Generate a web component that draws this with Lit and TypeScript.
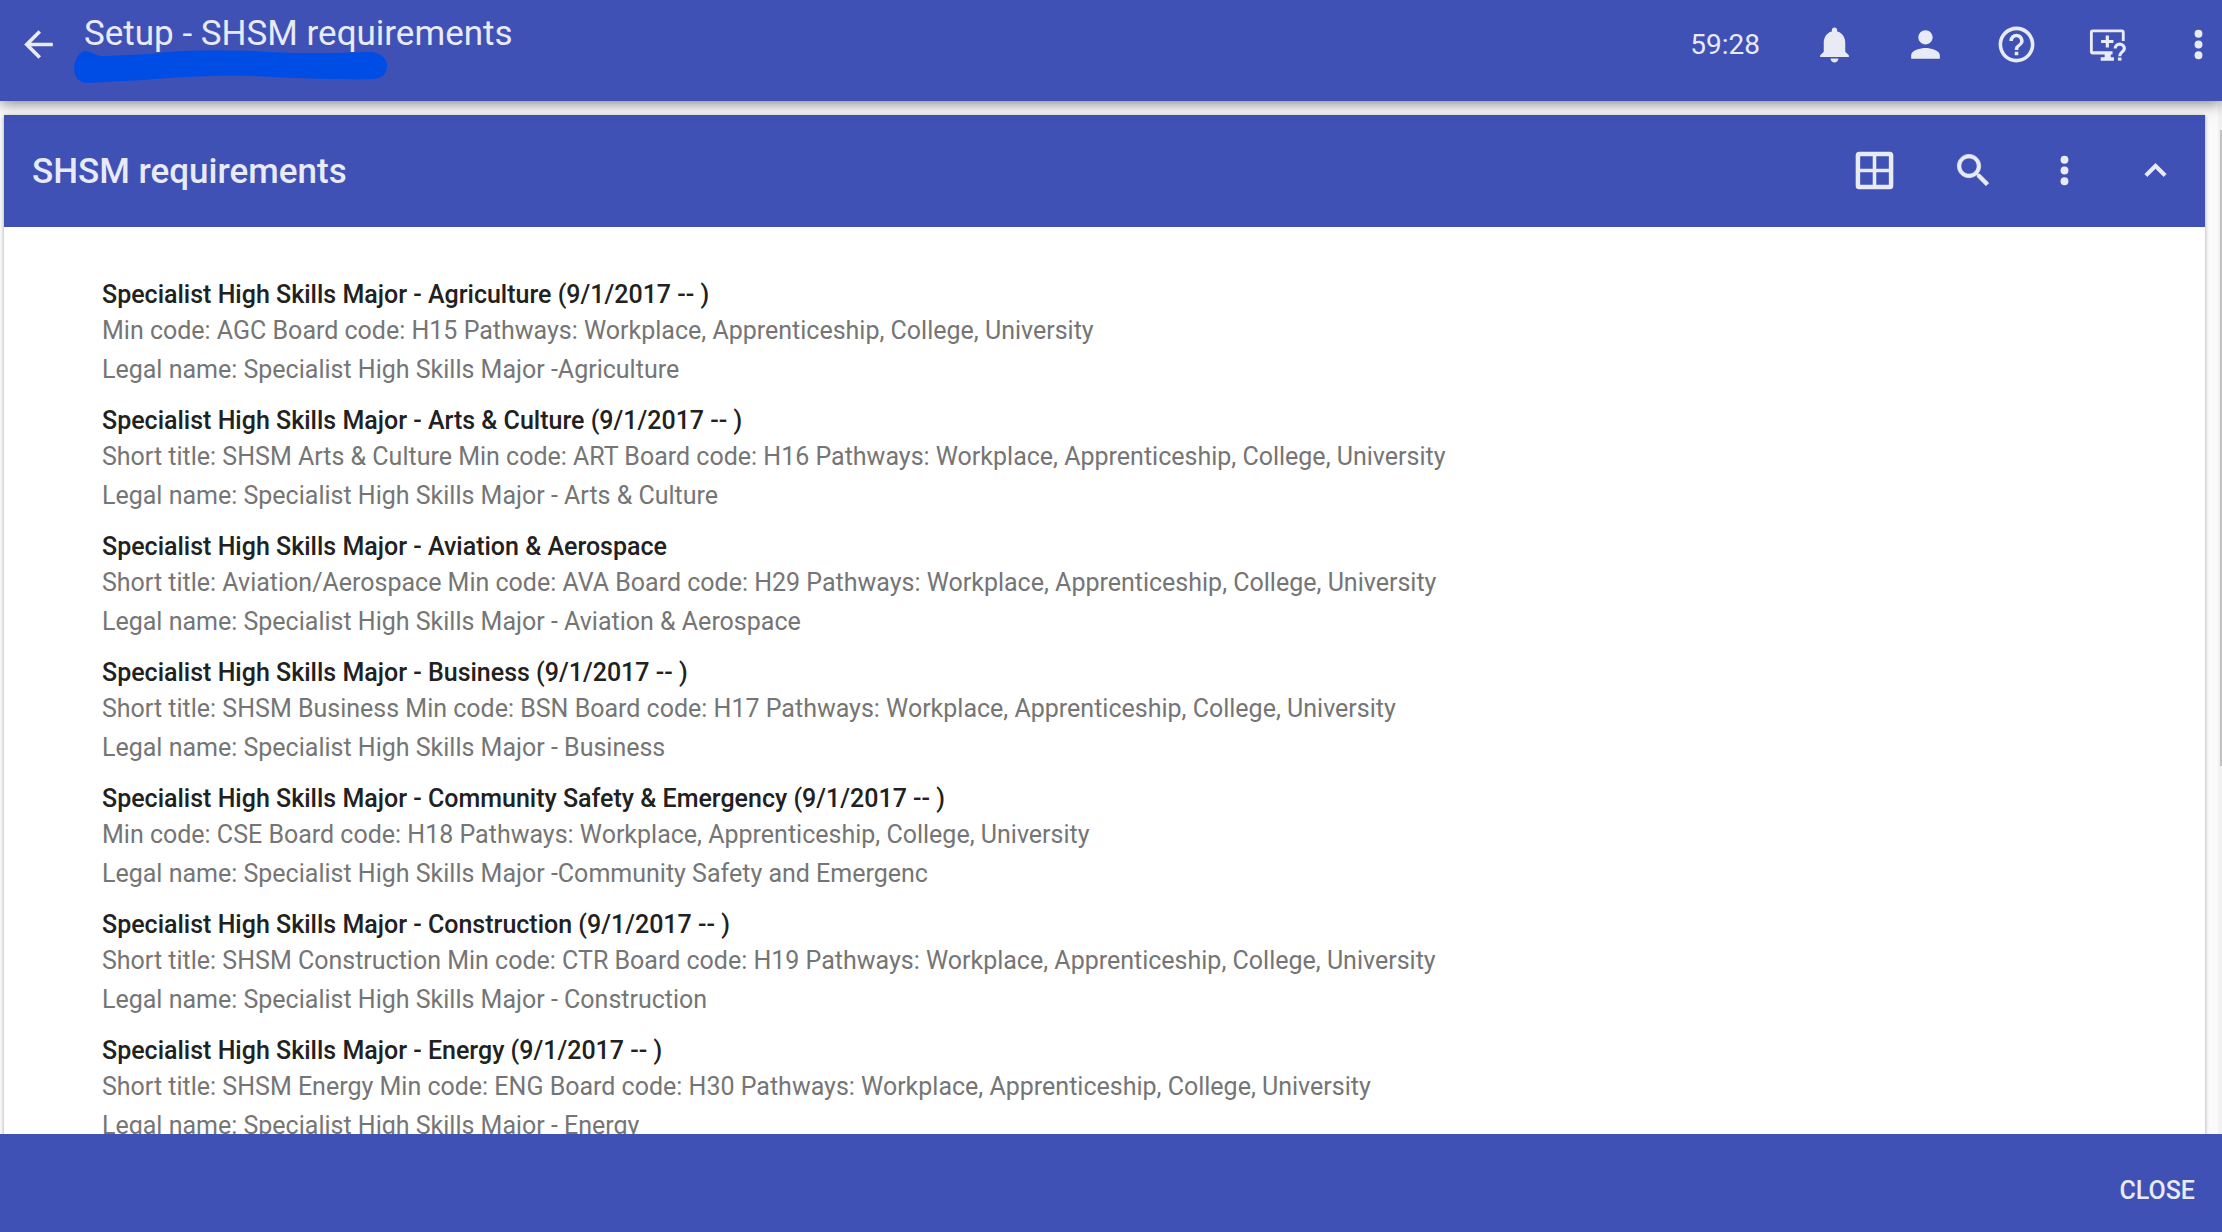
import { LitElement, html, css, svg } from "lit";
import { customElement, property } from "lit/decorators.js";

const ICONS = {
  back: svg`<path d="M20 11H7.83l5.59-5.59L12 4l-8 8 8 8 1.41-1.41L7.83 13H20z"/>`,
  bell: svg`<path d="M12 22c1.2 0 2.200-.9 2.200-2.200h-4.400c0 1.300.99 2.200 2.200 2.200zm6-6v-5c0-3.070-1.640-5.640-4.500-6.320V4c0-.83-.67-1.500-1.500-1.500s-1.500.67-1.500 1.500v.68C7.630 5.360 6 7.920 6 11v5l-2 2v1h16v-1z"/>`,
  person: svg`<path d="M12 12c2.21 0 4-1.79 4-4s-1.79-4-4-4-4 1.79-4 4 1.79 4 4 4zm0 2c-2.67 0-8 1.34-8 4v2h16v-2c0-2.66-5.33-4-8-4z"/>`,
  help: svg`<path d="M11 18h2v-2h-2zm1-16C6.48 2 2 6.48 2 12s4.48 10 10 10 10-4.48 10-10S17.52 2 12 2m0 18c-4.41 0-8-3.59-8-8s3.59-8 8-8 8 3.59 8 8-3.59 8-8 8m0-14c-2.21 0-4 1.79-4 4h2c0-1.1.9-2 2-2s2 .9 2 2c0 2-3 1.75-3 5h2c0-2.25 3-2.5 3-5 0-2.21-1.79-4-4-4"/>`,
  screen: svg`<path d="M21.600 10.100V5.100c0-.9-.6-1.500-1.500-1.500H3.700c-.9 0-1.500.6-1.500 1.500v11c0 .9.6 1.500 1.500 1.500h6.700v1.500H8.200V21h7.400v-1.900h-1.800v-1.500h1v-1.900H3.800V5.200h16.200v4.900z"/><path d="M11 7h1.800v2.500h2.500v1.700h-2.500v2.500H11v-2.500H8.400V9.500H11z"/><path d="M17.800 19.300h2V21h-2z"/><path d="M16.300 14.300c0-1.500 1.100-2.500 2.500-2.500s2.600 1 2.600 2.400c0 1.900-2.600 2-2.600 4.300" fill="none" stroke="currentColor" stroke-width="1.800"/>`,
  more: svg`<circle cx="12" cy="6" r="2.200"/><circle cx="12" cy="12" r="2.200"/><circle cx="12" cy="18" r="2.200"/>`,
  grid: svg`<path fill-rule="evenodd" d="M3.500 1.500h17a2 2 0 0 1 2 2v17a2 2 0 0 1-2 2h-17a2 2 0 0 1-2-2v-17a2 2 0 0 1 2-2zM4 4v7h7V4zM13 4v7h7V4zM4 13v7h7v-7zM13 13v7h7v-7z"/>`,
  search: svg`<path stroke="currentColor" stroke-width=".4" d="M15.500 14h-.79l-.28-.27C15.410 12.590 16 11.110 16 9.500 16 5.910 13.090 3 9.500 3S3 5.910 3 9.500 5.910 16 9.500 16c1.610 0 3.090-.59 4.230-1.570l.27.28v.79l5 4.990L20.490 19zm-6 0C7.010 14 5 11.990 5 9.500S7.010 5 9.500 5 14 7.010 14 9.500 11.990 14 9.500 14"/>`,
  up: svg`<path stroke="currentColor" stroke-width=".4" d="M12 8l-6 6 1.410 1.410L12 10.830l4.590 4.580L18 14z"/>`,
};

type IconName = keyof typeof ICONS;

interface Requirement {
  title: string;
  codes: string;
  legal: string;
}

const PATHWAYS = "Pathways: Workplace, Apprenticeship, College, University";

const REQUIREMENTS: Requirement[] = [
  {
    title: "Specialist High Skills Major - Agriculture (9/1/2017 -- )",
    codes: "Min code: AGC Board code: H15",
    legal: "Specialist High Skills Major -Agriculture",
  },
  {
    title: "Specialist High Skills Major - Arts & Culture (9/1/2017 -- )",
    codes: "Short title: SHSM Arts & Culture Min code: ART Board code: H16",
    legal: "Specialist High Skills Major - Arts & Culture",
  },
  {
    title: "Specialist High Skills Major - Aviation & Aerospace",
    codes: "Short title: Aviation/Aerospace Min code: AVA Board code: H29",
    legal: "Specialist High Skills Major - Aviation & Aerospace",
  },
  {
    title: "Specialist High Skills Major - Business (9/1/2017 -- )",
    codes: "Short title: SHSM Business Min code: BSN Board code: H17",
    legal: "Specialist High Skills Major - Business",
  },
  {
    title: "Specialist High Skills Major - Community Safety & Emergency (9/1/2017 -- )",
    codes: "Min code: CSE Board code: H18",
    legal: "Specialist High Skills Major -Community Safety and Emergenc",
  },
  {
    title: "Specialist High Skills Major - Construction (9/1/2017 -- )",
    codes: "Short title: SHSM Construction Min code: CTR Board code: H19",
    legal: "Specialist High Skills Major - Construction",
  },
  {
    title: "Specialist High Skills Major - Energy (9/1/2017 -- )",
    codes: "Short title: SHSM Energy Min code: ENG Board code: H30",
    legal: "Specialist High Skills Major - Energy",
  },
];

@customElement("icon-button")
class IconButton extends LitElement {
  @property() icon: IconName = "more";
  @property() label = "";

  static styles = css`
    :host {
      display: block;
      flex: none;
    }
    .button {
      display: block;
      padding: 0;
      border: 0;
      background: none;
      color: inherit;
      cursor: pointer;
    }
    .glyph {
      display: block;
      width: 43px;
      height: 43px;
      fill: currentColor;
    }
  `;

  render() {
    return html`<button class="button" type="button" aria-label=${this.label}>
      <svg class="glyph" viewBox="0 0 24 24" aria-hidden="true">${ICONS[this.icon]}</svg>
    </button>`;
  }
}

@customElement("app-root")
class AppRoot extends LitElement {
  static styles = css`
    :host {
      display: flex;
      flex-direction: column;
      height: 100vh;
      overflow: hidden;
      background: #fafafa;
      color: #212121;
      font-family: Roboto, "Liberation Sans", sans-serif;
      font-size: 25px;
    }
    .topbar {
      position: relative;
      z-index: 1;
      display: flex;
      flex: none;
      align-items: flex-start;
      box-sizing: border-box;
      height: 101px;
      padding: 0 2px 0 17px;
      background: #3f51b5;
      color: #e8eaf6;
      box-shadow: 0 2px 14px rgba(0, 0, 0, 0.5);
    }
    .back {
      margin-top: 23px;
    }
    .heading {
      flex: 1;
      margin-left: 24px;
      padding-top: 14px;
    }
    .title {
      margin: 0;
      font-size: 35px;
      line-height: 40px;
      font-weight: 400;
    }
    .scribble {
      position: absolute;
      left: 74px;
      top: 50px;
      width: 314px;
      height: 34px;
      fill: #004de6;
    }
    .tools {
      display: flex;
      align-items: center;
      gap: 48px;
      margin-top: 23px;
    }
    .timer {
      font-size: 28px;
      line-height: 43px;
      margin-right: 5px;
    }
    .scroller {
      display: flex;
      flex: 1;
      min-height: 0;
      overflow: hidden;
    }
    .panel {
      flex: 1;
      align-self: flex-start;
      margin: 14px 13px 0 4px;
      background: #fff;
      box-shadow: 0 1px 4px rgba(0, 0, 0, 0.35);
    }
    .panel-head {
      display: flex;
      align-items: flex-start;
      justify-content: space-between;
      box-sizing: border-box;
      height: 112px;
      padding: 34px 28px 0;
      background: #3f51b5;
      color: #e8eaf6;
    }
    .panel-title {
      margin: 0;
      font-size: 35px;
      line-height: 45px;
      font-weight: 500;
    }
    .panel-head .tools {
      margin-top: 0;
    }
    .wide {
      margin-right: 8px;
    }
    .list {
      margin: 0;
      padding: 50px 98px 40px;
      list-style: none;
    }
    .item {
      height: 126px;
    }
    .name,
    .detail {
      margin: 0;
      font-size: 25px;
    }
    .name {
      line-height: 36px;
      font-weight: 500;
    }
    .detail {
      line-height: 41px;
      color: #757575;
    }
    .codes {
      line-height: 36px;
    }
    .track {
      flex: none;
      box-sizing: border-box;
      width: 4px;
      padding: 29px 0 0 2px;
      background: #f1f1f1;
    }
    .thumb {
      height: 636px;
      background: #c1c1c1;
    }
    .footer {
      display: flex;
      flex: none;
      align-items: center;
      justify-content: flex-end;
      box-sizing: border-box;
      height: 98px;
      padding: 16px 27px 0;
      background: #3f51b5;
    }
    .close {
      padding: 0;
      border: 0;
      background: none;
      color: #e8eaf6;
      font: 500 25px/36px Roboto, "Liberation Sans", sans-serif;
      cursor: pointer;
    }
  `;

  render() {
    return html`
      <header class="topbar">
        <icon-button class="back" icon="back" label="Back"></icon-button>
        <div class="heading">
          <h1 class="title">Setup - SHSM requirements</h1>
        </div>
        <svg class="scribble" viewBox="0 0 314 34" aria-hidden="true">
          <path d="M12 1C18 2 24 7 32 6L76 4C100 0 135 0 180 1C215 4 260 3 298 2C308 4 314 9 313 18C312 25 307 28 300 29C260 30 220 28 180 26C140 25 105 27 70 30L14 33C5 33 0 27 0 18C1 9 5 1 12 1Z" />
        </svg>
        <div class="tools">
          <span class="timer">59:28</span>
          <icon-button icon="bell" label="Notifications"></icon-button>
          <icon-button icon="person" label="Account"></icon-button>
          <icon-button icon="help" label="Help"></icon-button>
          <icon-button icon="screen" label="Screen help"></icon-button>
          <icon-button icon="more" label="More"></icon-button>
        </div>
      </header>
      <main class="scroller">
        <section class="panel">
          <div class="panel-head">
            <h2 class="panel-title">SHSM requirements</h2>
            <div class="tools">
              <icon-button class="wide" icon="grid" label="Grid view"></icon-button>
              <icon-button icon="search" label="Search"></icon-button>
              <icon-button icon="more" label="More"></icon-button>
              <icon-button icon="up" label="Collapse"></icon-button>
            </div>
          </div>
          <ul class="list">
            ${REQUIREMENTS.map(
              (r) => html`<li class="item">
                <h3 class="name">${r.title}</h3>
                <p class="detail codes">${r.codes} ${PATHWAYS}</p>
                <p class="detail">Legal name: ${r.legal}</p>
              </li>`,
            )}
          </ul>
        </section>
        <div class="track" aria-hidden="true"><div class="thumb"></div></div>
      </main>
      <footer class="footer">
        <button class="close" type="button">CLOSE</button>
      </footer>
    `;
  }
}
